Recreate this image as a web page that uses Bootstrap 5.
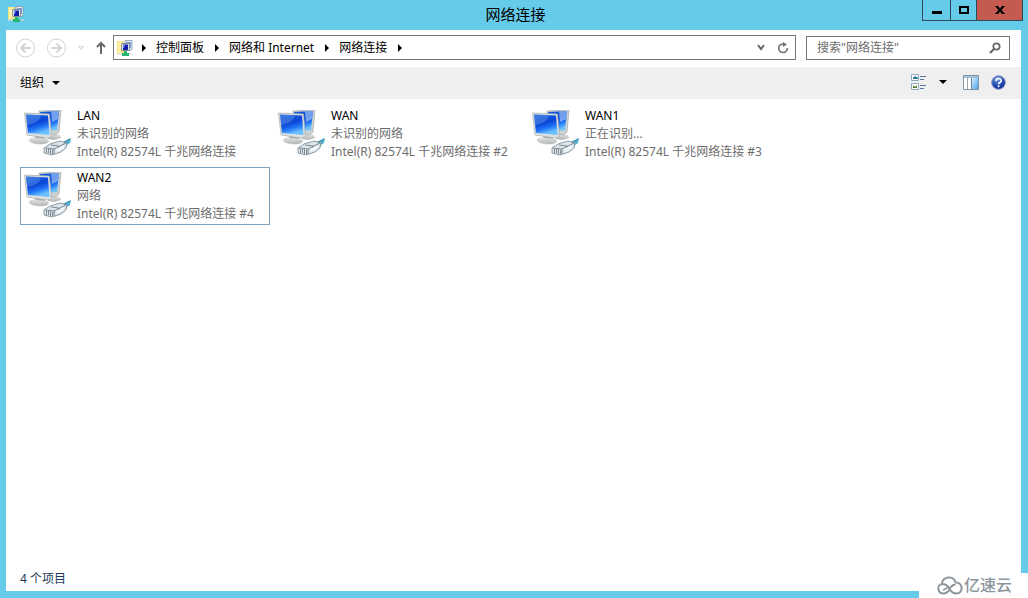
<!DOCTYPE html>
<html lang="zh-CN">
<head>
<meta charset="utf-8">
<meta name="viewport" content="width=device-width, initial-scale=1">
<title>网络连接</title>
<link rel="stylesheet" href="https://cdn.jsdelivr.net/npm/bootstrap@5.3.0/dist/css/bootstrap.min.css">
<style>
body { background: #66cae9; color: #000; font: 12px/18px "Noto Sans", "Noto Sans CJK SC", sans-serif; }
button { border: 0; padding: 0; background: none; color: inherit; line-height: 18px; }
svg { display: block; flex: none; }
.titlebar { height: 30px; padding: 0 5px 0 3px; }
.titlebar h1 { font-size: 15px; line-height: 28px; font-weight: 400; }
.side { flex: 1 1 0; }
.app-icon { padding: 4px 0 0 5px; }
.caption-btns { border: 1px solid #2f4b57; border-top: 0; height: 21px; }
.caption-btns button { width: 26px; display: flex; align-items: center; justify-content: center; }
.caption-btns button + button { border-left: 1px solid #2f4b57; }
.caption-btns .btn-min { width: 27px; }
.caption-btns .btn-x { width: 46px; background: #c45a50; }
.frame { margin: 0 7px 7px 6px; background: #fff; }
.navrow { height: 37px; padding: 0 11px 2px 10px; }
.address { border: 1px solid #74777b; height: 25px; padding: 0 6px 0 3px; margin: 0 10px 0 6px; }
.address a { color: #000; text-decoration: none; }
.crumb-gap { margin: 0 10px 0 9px; }
.crumb-sep { margin: 0 8px 0 9px; }
.searchbox { border: 1px solid #74777b; height: 24px; width: 204px; padding: 0 8px 0 10px; }
.searchbox input { border: 0; outline: 0; padding: 0; min-width: 0; background: none; }
.searchbox input::placeholder { color: #6d6d6d; opacity: 1; }
.toolbar { height: 32px; background: #efefef; padding: 0 15px 2px 14px; }
.toolbar .organize { padding-top: 2px; }
.items { padding: 6px 14px; gap: 4px; }
.conn { width: 250px; height: 58px; border: 1px solid transparent; padding: 1px 0 0 3px; gap: 5px; color: #6d6d6d; white-space: nowrap; text-decoration: none; }
.conn svg { margin-top: 3px; }
.conn.active { border-color: #7da2bf; }
.conn .title { color: #000; }
.status { padding: 3px 14px; color: #1e395b; }
.watermark { position: absolute; right: 0; bottom: 0; width: 109px; height: 25px; background: #fff; color: #8e959c; font-size: 16px; line-height: 25px; font-weight: 500; padding-left: 18px; gap: 1px; }
</style>
</head>
<body>
<svg width="0" height="0" class="position-absolute" aria-hidden="true">
  <defs>
    <linearGradient id="screen" x1="0" y1="0" x2=".35" y2="1"><stop offset="0" stop-color="#1a62dc"/><stop offset=".5" stop-color="#0b46d6"/><stop offset=".75" stop-color="#2074f6"/><stop offset="1" stop-color="#6cc2ff"/></linearGradient>
    <linearGradient id="pane" x1="0" y1="0" x2="1" y2="1"><stop offset="0" stop-color="#d4efff"/><stop offset="1" stop-color="#4ba4e6"/></linearGradient>
    <radialGradient id="helpball" cx=".4" cy=".25" r=".8"><stop offset="0" stop-color="#7ea2e8"/><stop offset=".6" stop-color="#2148b0"/><stop offset="1" stop-color="#152f85"/></radialGradient>
    <linearGradient id="base" x1="0" y1="0" x2="0" y2="1"><stop offset="0" stop-color="#e4e5e3"/><stop offset="1" stop-color="#b0b3b2"/></linearGradient>
    <symbol id="net" viewBox="0 0 48 48">
      <path d="M24 24l12 1 1 3-7 2-6-1z" fill="url(#base)"/>
      <path d="M15 1l22-1-2 22-3 3-15-3z" fill="#ccd2d2" stroke="#a3abad" stroke-width=".7"/>
      <path d="M16 2l19-1-2 19-14 1z" fill="url(#screen)"/>
      <path d="M27 1.500l8-.5-1 8-6 3z" fill="#b5d7fb" opacity=".6"/>
      <path d="M11 26l9 1 2 4-10-1z" fill="#a5a8a7"/>
      <path d="M6 29c4-2 14-1 18 1 2 2-1 4-8 4S3 31 6 29z" fill="url(#base)" stroke="#bfc2c0" stroke-width=".6"/>
      <path d="M.5 3l25 1 2 23-4 1L3 25z" fill="#dde1e1" stroke="#a3abad" stroke-width=".7"/>
      <path d="M2 4.500l22 1 1.500 19.500L4 23z" fill="url(#screen)"/>
      <path d="M2 4.500l15 .7c-1 5-5 8-14 10z" fill="#79a9f2" opacity=".35"/>
      <path d="M38 33l9-5-1 5-6 4z" fill="#55afcf"/><path d="M38 33l8-4" stroke="#2486ac"/>
      <path d="M20 38l6-4 10-3 7 2-1 5-5 4-9 3-8-2z" fill="#dde5ea" stroke="#71858f" stroke-width=".8"/>
      <path d="M21 38l9 1 12-6M30 39v5M27 35l8 1v4" fill="none" stroke="#5f7480" stroke-width=".8"/>
      <path d="M22.500 39v4M24.500 39v4M26.500 39v5M28.500 40v4" stroke="#68747c" stroke-width=".8"/>
      <path d="M32 39l8-4v3l-7 4z" fill="#f3f8fb"/>
    </symbol>
    <symbol id="netsmall" viewBox="0 0 16 16">
      <path d="M0 1h7v12l-7 1z" fill="#f5df7c"/><path d="M1 2l4-1v11l-4 1z" fill="#fff2a8"/>
      <path d="M8 .5h7v9l-2 1H8z" fill="#e6eef3" stroke="#829aaa" stroke-width=".8"/><path d="M9 2h5v6H9z" fill="#819ad8"/>
      <path d="M4.500 3.500h8v7h-8z" fill="#dde5e9" stroke="#74828c" stroke-width=".8"/><path d="M6 4.500h5V10H6z" fill="#141ca8"/><path d="M6 4.500h2L7 8H6z" fill="#6c8be6"/>
      <path d="M0 13.500h16v1.200H0z" fill="#d0dce0"/><path d="M7 11h3v2h2v3H5v-3h2z" fill="#22b874"/>
    </symbol>
    <symbol id="crumb" viewBox="0 0 4 8"><path d="M0 0l4 4-4 4z"/></symbol>
    <symbol id="drop" viewBox="0 0 8 4"><path d="M0 0h8L4 4z"/></symbol>
  </defs>
</svg>

<div class="d-flex flex-column vh-100">
  <header class="titlebar d-flex">
    <div class="side app-icon"><svg width="16" height="18" viewBox="0 -2 16 18"><use href="#netsmall" width="16" height="16"/></svg></div>
    <h1 class="m-0">网络连接</h1>
    <div class="side d-flex justify-content-end">
      <div class="caption-btns d-flex">
        <button class="btn-min" aria-label="最小化"><svg width="10" height="10"><path d="M0 6h10v3H0z"/></svg></button>
        <button aria-label="最大化"><svg width="10" height="8"><path d="M1 1h8v6H1z" fill="none" stroke="#000" stroke-width="2"/></svg></button>
        <button class="btn-x" aria-label="关闭"><svg width="10" height="8"><path d="M0 0h3l2 2.500L7 0h3L6.500 4 10 8H7L5 5.500 3 8H0l3.500-4z"/></svg></button>
      </div>
    </div>
  </header>

  <main class="frame d-flex flex-column flex-grow-1">
    <nav class="navrow d-flex align-items-center" aria-label="地址">
      <button aria-label="后退"><svg width="19" height="20" viewBox="0 0 19 20" fill="none" stroke="#d2d2d2"><circle cx="9.500" cy="10" r="9"/><path d="M14.500 10H5.500M9.500 5.500L5 10l4.500 4.500" stroke-width="1.800"/></svg></button>
      <button class="ms-2 ps-1" aria-label="前进"><svg width="19" height="20" viewBox="0 0 19 20" fill="none" stroke="#d2d2d2"><circle cx="9.500" cy="10" r="9"/><path d="M4.500 10h9M9.500 5.500L14 10l-4.500 4.500" stroke-width="1.800"/></svg></button>
      <button class="ms-2 ps-1" aria-label="最近位置"><svg width="6" height="4" viewBox="0 0 7 4" fill="none" stroke="#c8c8c8"><path d="M.5.500h6l-3 3z"/></svg></button>
      <button class="ms-2 ps-1" aria-label="上移"><svg width="11" height="14" viewBox="0 0 11 14" fill="none" stroke="#65686b" stroke-width="2"><path d="M5 13V2M1 6l4-4 4 4"/></svg></button>
      <div class="address d-flex align-items-center flex-grow-1">
        <svg width="16" height="16"><use href="#netsmall"/></svg>
        <svg class="crumb-gap" width="4" height="8"><use href="#crumb"/></svg>
        <a href="#">控制面板</a>
        <svg class="crumb-sep" width="8" height="8"><use href="#crumb" x="2" width="4" height="8"/></svg>
        <a href="#">网络和 Internet</a>
        <svg class="crumb-sep" width="8" height="8"><use href="#crumb" x="2" width="4" height="8"/></svg>
        <a href="#">网络连接</a>
        <svg class="crumb-sep" width="8" height="8"><use href="#crumb" x="2" width="4" height="8"/></svg>
        <button class="ms-auto" aria-label="展开地址"><svg width="8" height="7" fill="none" stroke="#65686b" stroke-width="2"><path d="M1 1l3 4 3-4"/></svg></button>
        <button class="ms-2 ps-1" aria-label="刷新"><svg width="12" height="12" fill="none" stroke="#707376" stroke-width="1.600"><path d="M6.500 2A4.300 4.300 0 1 0 10.300 6"/><path d="M6 0v5l4-2.500z" fill="#707376" stroke="none"/></svg></button>
      </div>
      <div class="searchbox d-flex align-items-center">
        <input class="flex-grow-1" type="text" placeholder="搜索&quot;网络连接&quot;" aria-label="搜索">
        <svg width="12" height="12" fill="none" stroke="#65686b"><circle cx="7.500" cy="4.500" r="3.200" stroke-width="1.700"/><path d="M5 7l-4 4" stroke-width="2.200"/></svg>
      </div>
    </nav>

    <div class="toolbar d-flex align-items-center">
      <button class="organize d-flex align-items-center gap-2 me-auto">组织<svg width="8" height="4"><use href="#drop"/></svg></button>
      <button aria-label="视图"><svg width="16" height="16"><path d="M.5.500h7v6h-7zM.5 9.500h7v6h-7z" fill="#fff" stroke="#92aabd"/><path d="M2 4l2-2 3 2v1H2z" fill="#226fa6"/><path d="M2 14v-3l2 2 2-2v3z" fill="#4f7f24"/><path d="M9 2.500h6M9 5.500h4M9 11.500h6M9 14.500h4" stroke="#5873a4"/></svg></button>
      <button class="ms-2 p-1" aria-label="更多视图"><svg width="8" height="4"><use href="#drop"/></svg></button>
      <button class="ms-2 ps-1" aria-label="预览窗格"><svg width="16" height="15"><path d="M.5.500h15v14H.5z" fill="#fff" stroke="#8195a7"/><path d="M1 1h14v2H1z" fill="#a3c0d8"/><path d="M4.500 3v11" stroke="#9aa9b4"/><path d="M9 3h6v11H9z" fill="url(#pane)"/><path d="M8.500 3v11" stroke="#63829c"/></svg></button>
      <button class="ms-2 ps-1" aria-label="帮助"><svg width="15" height="15" viewBox="0 0 15 15"><circle cx="7.500" cy="7.500" r="6.800" fill="url(#helpball)" stroke="#7d91c0"/><path d="M5 6c0-3.500 5.500-3.200 5.200 0-.2 1.600-2.500 1.600-2.500 3.200" fill="none" stroke="#fff" stroke-width="1.700"/><circle cx="7.600" cy="11.300" r="1" fill="#fff"/></svg></button>
    </div>

    <section class="items d-flex flex-wrap align-content-start flex-grow-1">
      <a class="conn d-flex" href="#"><svg width="48" height="48"><use href="#net"/></svg><div><div class="title">LAN</div><div>未识别的网络</div><div>Intel(R) 82574L 千兆网络连接</div></div></a>
      <a class="conn d-flex" href="#"><svg width="48" height="48"><use href="#net"/></svg><div><div class="title">WAN</div><div>未识别的网络</div><div>Intel(R) 82574L 千兆网络连接 #2</div></div></a>
      <a class="conn d-flex" href="#"><svg width="48" height="48"><use href="#net"/></svg><div><div class="title">WAN1</div><div>正在识别...</div><div>Intel(R) 82574L 千兆网络连接 #3</div></div></a>
      <a class="conn active d-flex" href="#"><svg width="48" height="48"><use href="#net"/></svg><div><div class="title">WAN2</div><div>网络</div><div>Intel(R) 82574L 千兆网络连接 #4</div></div></a>
    </section>
    <footer class="status">4 个项目</footer>
  </main>
</div>

<div class="watermark d-flex align-items-center">
  <svg width="26" height="19" viewBox="0 0 26 19" fill="none" stroke="#8e959c" stroke-width="2"><path d="M5 8C5 0 17-1 18.500 6.500M18.500 6.500c8 0 8 11 1 11-5 0-6-3-7.500-5.500C10 9 8 8 5.500 8-.5 8.500 0 17.500 6.500 17.500c5 0 5-3 7-6 1.500-2 2.500-3 5-3"/><path d="M6 13.500c2 1 3-2 5-2" stroke-width="1.500"/></svg>
  <span>亿速云</span>
</div>
<script src="https://cdn.jsdelivr.net/npm/bootstrap@5.3.0/dist/js/bootstrap.bundle.min.js"></script>
</body>
</html>
